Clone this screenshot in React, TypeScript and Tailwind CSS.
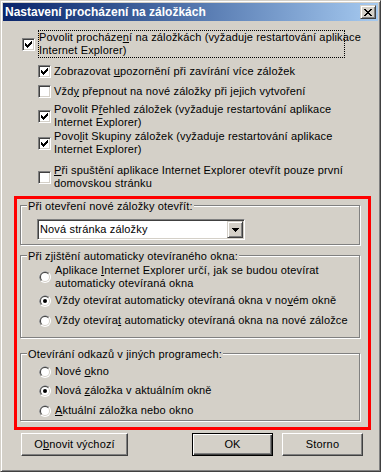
import React from "react"

// classic Win2000 dialog colours
// face #d4d0c8, shadow #808080, dark #404040

function Check({ checked }: { checked?: boolean }) {
  return (
    <span className="relative block w-[13px] h-[13px] shrink-0 bg-white border border-t-[#808080] border-l-[#808080] border-r-white border-b-white shadow-[inset_1px_1px_0_#404040,inset_-1px_-1px_0_#d4d0c8]">
      {checked && (
        <svg
          className="absolute left-[2px] top-[2px]"
          width="7"
          height="7"
          viewBox="0 0 7 7"
          shapeRendering="crispEdges"
        >
          <path
            d="M0 2h1v3H0zM1 3h1v3H1zM2 4h1v3H2zM3 3h1v3H3zM4 2h1v3H4zM5 1h1v3H5zM6 0h1v3H6z"
            fill="#000"
          />
        </svg>
      )}
    </span>
  )
}

function Radio({ checked }: { checked?: boolean }) {
  return (
    <svg width="12" height="12" viewBox="0 0 12 12" className="shrink-0 block">
      <circle cx="6" cy="6" r="6" fill="#fff" />
      <path d="M1.76 10.24A6 6 0 0 1 10.24 1.76Z" fill="#808080" />
      <circle cx="6" cy="6" r="5" fill="#d4d0c8" />
      <path d="M2.46 9.54A5 5 0 0 1 9.54 2.46Z" fill="#404040" />
      <circle cx="6" cy="6" r="4" fill="#fff" />
      {checked && <circle cx="6" cy="6" r="2" fill="#000" />}
    </svg>
  )
}

function CheckRow({
  checked,
  className,
  children,
}: {
  checked?: boolean
  className: string
  children: React.ReactNode
}) {
  return (
    <div className={`flex items-center gap-[3px] ml-[35px] ${className}`}>
      <Check checked={checked} />
      <div className="leading-[13px] whitespace-nowrap">{children}</div>
    </div>
  )
}

function RadioRow({
  checked,
  className,
  children,
}: {
  checked?: boolean
  className: string
  children: React.ReactNode
}) {
  return (
    <div className={`flex items-center gap-[4px] ${className}`}>
      <Radio checked={checked} />
      <div className="leading-[13px] whitespace-nowrap">{children}</div>
    </div>
  )
}

function Group({
  label,
  className,
  children,
}: {
  label: string
  className: string
  children: React.ReactNode
}) {
  return (
    <div
      className={`relative ml-[17px] w-[340px] border border-[#808080] shadow-[inset_1px_1px_0_#fff,1px_1px_0_#fff] ${className}`}
    >
      <span className="absolute left-[6px] -top-[6px] px-[1px] bg-[#d4d0c8] leading-[13px] whitespace-nowrap">
        {label}
      </span>
      {children}
    </div>
  )
}

export default function App() {
  return (
    <div className="relative w-[381px] h-[472px] p-[2px] bg-[#d4d0c8] border border-t-[#d4d0c8] border-l-[#d4d0c8] border-r-[#404040] border-b-[#404040] shadow-[inset_1px_1px_0_#fff,inset_-1px_-1px_0_#808080] text-[11px] tracking-[0.15px] text-black font-['Liberation_Sans',Arial,sans-serif] overflow-hidden">
      {/* title bar */}
      <div className="h-[18px] flex items-center justify-between pl-[2px] pr-[2px] bg-linear-to-r from-[#0a246a] to-[#a6caf0]">
        <span className="text-white font-bold text-[12px] tracking-normal leading-[13px] whitespace-nowrap">
          Nastavení procházení na záložkách
        </span>
        <div className="w-[16px] h-[14px] flex items-center justify-center bg-[#d4d0c8] border border-t-[#d4d0c8] border-l-[#d4d0c8] border-r-[#404040] border-b-[#404040] shadow-[inset_1px_1px_0_#fff,inset_-1px_-1px_0_#808080]">
          <svg width="8" height="7" viewBox="0 0 8 7" shapeRendering="crispEdges">
            <path
              d="M0 0h2v1H0zM6 0h2v1H6zM1 1h2v1H1zM5 1h2v1H5zM2 2h4v1H2zM3 3h2v1H3zM2 4h4v1H2zM1 5h2v1H1zM5 5h2v1H5zM0 6h2v1H0zM6 6h2v1H6z"
              fill="#000"
            />
          </svg>
        </div>
      </div>

      {/* checkboxes */}
      <div className="flex items-center gap-[3px] ml-[19px] mt-[9px]">
        <Check checked />
        <div className="w-[307px] border border-dotted border-black leading-[13px] whitespace-nowrap">
          Povolit procháze<u>n</u>í na záložkách (vyžaduje restartování aplikace
          <br />
          Internet Explorer)
        </div>
      </div>
      <CheckRow checked className="mt-[7px]">
        Zobrazovat <u>u</u>pozornění při zavírání více záložek
      </CheckRow>
      <CheckRow className="mt-[7px]">
        Vžd<u>y</u> přepnout na nové záložky při jejich vytvoření
      </CheckRow>
      <CheckRow checked className="mt-[5px]">
        Povolit P<u>ř</u>ehled záložek (vyžaduje restartování aplikace
        <br />
        Internet Explorer)
      </CheckRow>
      <CheckRow checked className="mt-[1px]">
        Povo<u>l</u>it Skupiny záložek (vyžaduje restartování aplikace
        <br />
        Internet Explorer)
      </CheckRow>
      <CheckRow className="mt-[8px]">
        <u>P</u>ři spuštění aplikace Internet Explorer otevřít pouze první
        <br />
        domovskou stránku
      </CheckRow>

      {/* groups */}
      <Group
        label="Při otevření nové záložky otevřít:"
        className="mt-[15px] h-[40px] pt-[13px] pl-[16px]"
      >
        <div className="w-[208px] h-[21px] flex p-[1px] bg-white border border-t-[#808080] border-l-[#808080] border-r-white border-b-white shadow-[inset_1px_1px_0_#404040,inset_-1px_-1px_0_#d4d0c8]">
          <div className="flex-1 pl-[1px] flex items-center leading-[13px] whitespace-nowrap">
            Nová stránka záložky
          </div>
          <div className="w-[16px] h-full flex items-center justify-center bg-[#d4d0c8] border border-t-[#d4d0c8] border-l-[#d4d0c8] border-r-[#404040] border-b-[#404040] shadow-[inset_1px_1px_0_#fff,inset_-1px_-1px_0_#808080]">
            <svg width="7" height="4" viewBox="0 0 7 4" shapeRendering="crispEdges">
              <path d="M0 0h7v1H0zM1 1h5v1H1zM2 2h3v1H2zM3 3h1v1H3z" fill="#000" />
            </svg>
          </div>
        </div>
      </Group>

      <Group
        label="Při zjištění automaticky otevíraného okna:"
        className="mt-[10px] h-[83px] pt-[8px] pl-[18px]"
      >
        <RadioRow className="">
          Aplikace <u>I</u>nternet Explorer určí, jak se budou otevírat
          <br />
          automaticky otevíraná okna
        </RadioRow>
        <RadioRow checked className="mt-[4px]">
          Vždy otevírat automaticky otevíraná okna v no<u>v</u>ém okně
        </RadioRow>
        <RadioRow className="mt-[7px]">
          Vždy otevíra<u>t</u> automaticky otevíraná okna na nové záložce
        </RadioRow>
      </Group>

      <Group
        label="Otevírání odkazů v jiných programech:"
        className="mt-[15px] h-[68px] pt-[11px] pl-[18px]"
      >
        <RadioRow className="">
          Nové <u>o</u>kno
        </RadioRow>
        <RadioRow checked className="mt-[6px]">
          Nová <u>z</u>áložka v aktuálním okně
        </RadioRow>
        <RadioRow className="mt-[7px]">
          <u>A</u>ktuální záložka nebo okno
        </RadioRow>
      </Group>

      {/* buttons */}
      <div className="flex mt-[12px] ml-[18px]">
        <div className="w-[107px] h-[23px] flex items-center justify-center bg-[#d4d0c8] border border-t-white border-l-white border-r-[#404040] border-b-[#404040] shadow-[inset_-1px_-1px_0_#808080] leading-[13px]">
          O<u>b</u>novit výchozí
        </div>
        <div className="ml-[64px] w-[81px] h-[23px] flex items-center justify-center bg-[#d4d0c8] border border-black shadow-[inset_1px_1px_0_#fff,inset_-1px_-1px_0_#404040,inset_-2px_-2px_0_#808080] leading-[13px]">
          OK
        </div>
        <div className="ml-[9px] w-[81px] h-[23px] flex items-center justify-center bg-[#d4d0c8] border border-t-white border-l-white border-r-[#404040] border-b-[#404040] shadow-[inset_-1px_-1px_0_#808080] leading-[13px]">
          Storno
        </div>
      </div>

      {/* red annotation frame */}
      <div className="absolute left-[13px] top-[195px] w-[357px] h-[234px] border-[3px] border-[#ff0000] pointer-events-none" />
    </div>
  )
}
